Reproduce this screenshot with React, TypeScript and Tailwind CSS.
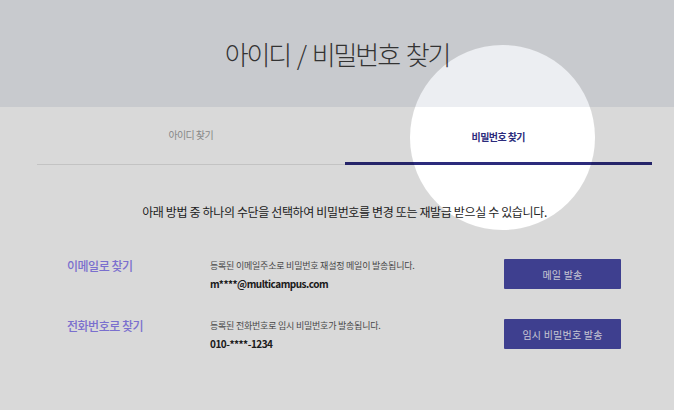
const font = { fontFamily: '"Noto Sans CJK KR", "Noto Sans", sans-serif' };

interface FindMethod {
  id: string;
  label: string;
  guide: string;
  target: string;
  action: string;
}

const methods: FindMethod[] = [
  {
    id: "email",
    label: "이메일로 찾기",
    guide: "등록된 이메일주소로 비밀번호 재설정 메일이 발송됩니다.",
    target: "m****@multicampus.com",
    action: "메일 발송",
  },
  {
    id: "phone",
    label: "전화번호로 찾기",
    guide: "등록된 전화번호로 임시 비밀번호가 발송됩니다.",
    target: "010-****-1234",
    action: "임시 비밀번호 발송",
  },
];

export default function App() {
  return (
    <div className="relative h-[410px] w-[674px] overflow-hidden bg-white" style={font}>
      <header className="flex h-[107px] items-center justify-center bg-[#eceef2]">
        <h1 className="text-[26px] font-light tracking-[-0.08em] [word-spacing:3px] text-[#3c3c3c]">
          아이디 / 비밀번호 찾기
        </h1>
      </header>

      <div className="ml-[37px] w-[615px]">
        <nav className="flex h-[58px]">
          <button
            type="button"
            className="flex-1 border-b-[1.5px] border-[#e6e6e6] pb-[3px] text-[10px] tracking-[-0.06em] text-[#a0a0a0]"
          >
            아이디 찾기
          </button>
          <button
            type="button"
            className="flex-1 border-b-[3px] border-[#2c2b7c] pt-[4px] text-[10px] font-bold tracking-[-0.06em] text-[#2c2b7c]"
          >
            비밀번호 찾기
          </button>
        </nav>

        <p className="mt-[38px] text-center text-[12px] tracking-[-0.03em] text-[#262626]">
          아래 방법 중 하나의 수단을 선택하여 비밀번호를 변경 또는 재발급 받으실 수 있습니다.
        </p>

        <div className="mt-[38px] flex flex-col gap-[29px] pl-[30px] pr-[31px]">
          {methods.map((method) => (
            <div key={method.id} className="flex items-start">
              <div className="w-[143px] text-[12px] font-medium leading-[14px] tracking-[-0.04em] text-[#9083f3]">
                {method.label}
              </div>
              <div className="flex-1 pt-[1px]">
                <p className="text-[9px] leading-[12px] tracking-[-0.025em] text-[#555]">{method.guide}</p>
                <p className="mt-[6px] text-[10px] font-bold leading-[12px] tracking-[-0.05em] text-[#222]">
                  {method.target}
                </p>
              </div>
              <button
                type="button"
                className="h-[30px] w-[117px] rounded-[1px] bg-[#494ba8] text-[10px] tracking-[0.02em] text-[#e8e8f8]"
              >
                {method.action}
              </button>
            </div>
          ))}
        </div>
      </div>

      {/* spotlight overlay around the active tab */}
      <div className="pointer-events-none absolute left-[410px] top-[45px] h-[185px] w-[185px] rounded-full shadow-[0_0_0_9999px_rgba(0,0,0,0.15)]" />
    </div>
  );
}
